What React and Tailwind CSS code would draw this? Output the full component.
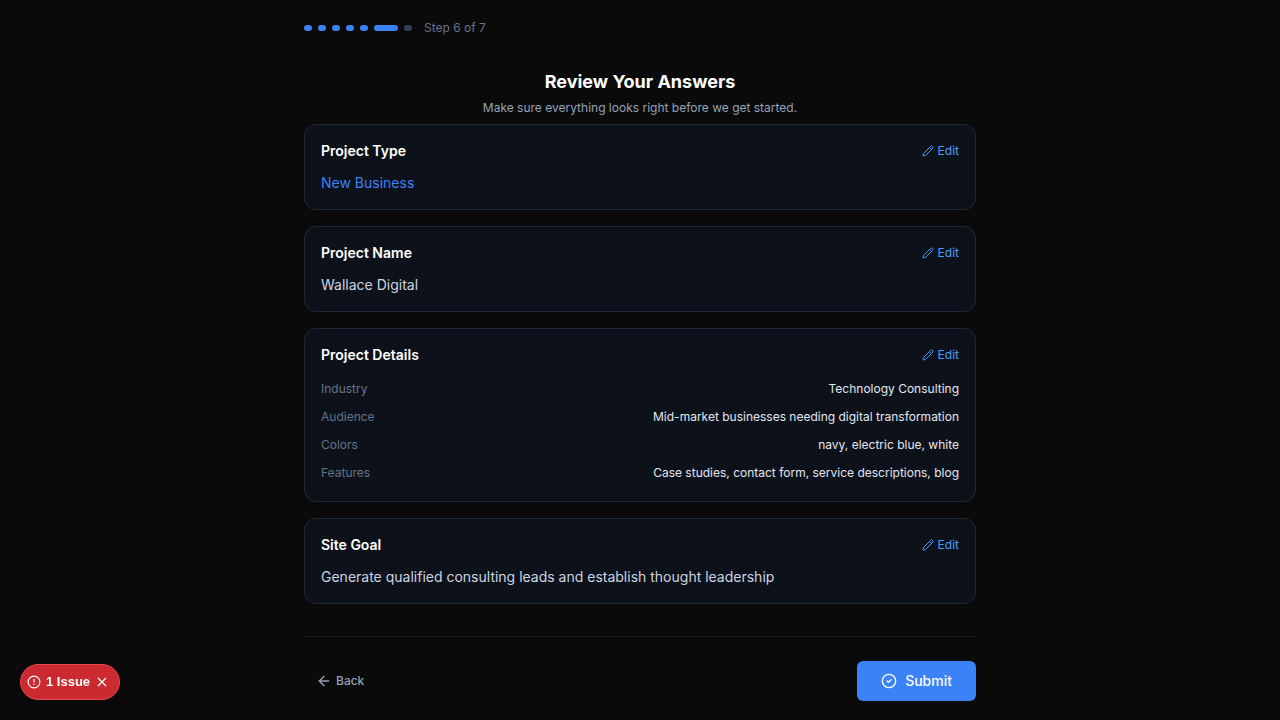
import { useState } from 'react';
import { ArrowLeft, CircleCheck, Pencil } from 'lucide-react';

const TOTAL_STEPS = 7;

const details = [
  { label: 'Industry', value: 'Technology Consulting' },
  { label: 'Audience', value: 'Mid-market businesses needing digital transformation' },
  { label: 'Colors', value: 'navy, electric blue, white' },
  { label: 'Features', value: 'Case studies, contact form, service descriptions, blog' },
];

function StepIndicator({ current }) {
  return (
    <div className="flex items-center gap-3">
      <div className="flex items-center gap-[6px]">
        {Array.from({ length: TOTAL_STEPS }, (_, i) => {
          const step = i + 1;
          if (step === current) {
            return <span key={step} className="h-[6px] w-6 rounded-full bg-[#3b82f6]" />;
          }
          return (
            <span
              key={step}
              className={`h-[6px] w-2 rounded-full ${step < current ? 'bg-[#3b82f6]' : 'bg-[#334155]'}`}
            />
          );
        })}
      </div>
      <span className="text-[12px] leading-4 text-[#64748b]">
        Step {current} of {TOTAL_STEPS}
      </span>
    </div>
  );
}

function ReviewCard({ title, children }) {
  return (
    <section className="rounded-xl border border-[#1e293b] bg-[#0d111a] p-4">
      <div className="mb-3 flex items-center justify-between">
        <h2 className="text-[14px] leading-5 font-semibold text-white">{title}</h2>
        <button
          type="button"
          aria-label={`Edit ${title}`}
          className="flex items-center gap-1 text-[12px] leading-4 text-[#479ffa] hover:text-blue-300"
        >
          <Pencil className="size-3" />
          Edit
        </button>
      </div>
      {children}
    </section>
  );
}

function IssueBadge() {
  const [open, setOpen] = useState(true);

  if (!open) return null;

  return (
    <div className="fixed bottom-5 left-5 flex h-9 items-center rounded-full border border-[#e5484d] bg-[#ca2a30] pr-[11px] pl-[6px] text-white shadow-lg">
      <button
        type="button"
        className="flex items-center gap-[5px] font-['Liberation_Sans',sans-serif] text-[13px] leading-4 font-bold"
      >
        <svg width="14" height="14" viewBox="0 0 16 16" fill="none" stroke="currentColor" strokeWidth="1.3">
          <circle cx="8" cy="8" r="6.7" />
          <path d="M8 4.5v4.2M8 10v1.5" />
        </svg>
        1 Issue
      </button>
      <button type="button" aria-label="Close" onClick={() => setOpen(false)} className="ml-[6px]">
        <svg width="12" height="12" viewBox="0 0 12 12" fill="none" stroke="currentColor" strokeWidth="1.2">
          <path d="M2 2l8 8M10 2l-8 8" />
        </svg>
      </button>
    </div>
  );
}

export default function App() {
  return (
    <div className="min-h-screen bg-[#0a0a0a] font-['Inter',sans-serif]">
      <main className="mx-auto max-w-2xl pt-5 pb-4">
        <StepIndicator current={6} />

        <header className="mt-8 mb-2 text-center">
          <h1 className="text-[18px] leading-7 font-bold text-white">Review Your Answers</h1>
          <p className="mt-1 text-[12px] leading-4 text-[#94a3b8]">
            Make sure everything looks right before we get started.
          </p>
        </header>

        <div className="space-y-4">
          <ReviewCard title="Project Type">
            <p className="text-[14px] leading-5 text-[#3b82f6]">New Business</p>
          </ReviewCard>

          <ReviewCard title="Project Name">
            <p className="text-[14px] leading-5 text-[#cbd5e1]">Wallace Digital</p>
          </ReviewCard>

          <ReviewCard title="Project Details">
            <dl className="space-y-1">
              {details.map((item) => (
                <div key={item.label} className="flex justify-between gap-4 text-[12px] leading-6">
                  <dt className="text-[#64748b]">{item.label}</dt>
                  <dd className="text-right text-[#e2e8f0]">{item.value}</dd>
                </div>
              ))}
            </dl>
          </ReviewCard>

          <ReviewCard title="Site Goal">
            <p className="text-[14px] leading-5 text-[#cbd5e1]">
              Generate qualified consulting leads and establish thought leadership
            </p>
          </ReviewCard>
        </div>

        <footer className="mt-8 flex items-center justify-between border-t border-[#141922] pt-6">
          <button
            type="button"
            className="flex h-10 items-center gap-1 px-3 text-[12px] leading-4 font-medium text-[#94a3b8] hover:text-white"
          >
            <ArrowLeft className="size-4" />
            Back
          </button>
          <button
            type="submit"
            className="flex h-10 items-center gap-2 rounded-md bg-[#3b82f6] px-6 text-[14px] leading-5 font-medium text-white hover:bg-blue-600"
          >
            <CircleCheck className="size-4" />
            Submit
          </button>
        </footer>
      </main>

      <IssueBadge />
    </div>
  );
}
